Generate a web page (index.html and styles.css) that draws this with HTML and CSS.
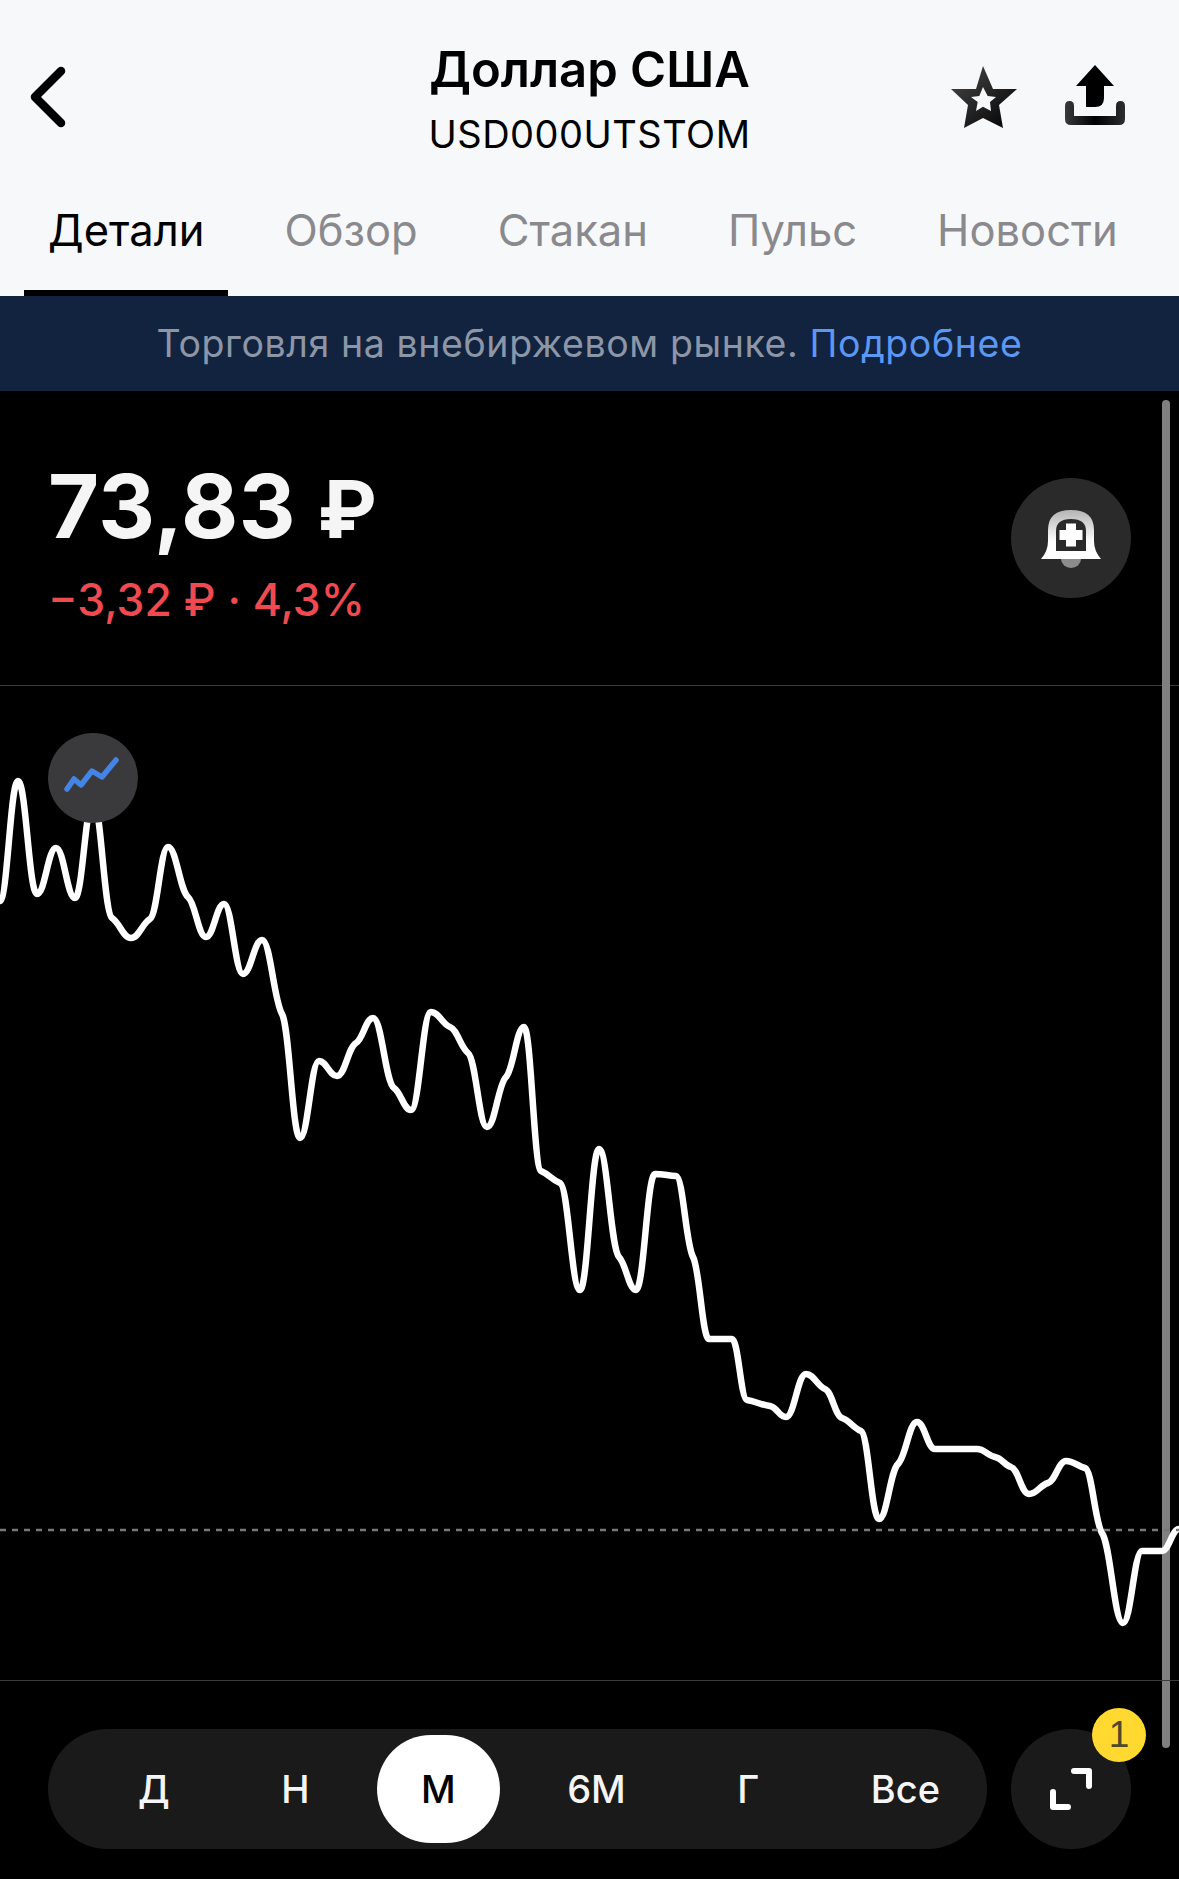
FILE: index.html
```html
<!DOCTYPE html>
<html lang="ru">
<head>
    <meta charset="UTF-8">
    <meta name="viewport" content="width=device-width, initial-scale=1.0">
    <title>Доллар США</title>
    <link rel="stylesheet" href="styles.css">
</head>
<body>
    <header class="top">
        <div class="nav">
            <button class="back" type="button">
                <svg width="40" height="64" viewBox="0 0 40 64"><path d="M32 6 L6 32 L32 58" fill="none" stroke="#000" stroke-width="8.5" stroke-linecap="round" stroke-linejoin="round"/></svg>
            </button>
            <div class="title">
                <h1>Доллар США</h1>
                <p>USD000UTSTOM</p>
            </div>
            <div class="actions">
                <svg class="star" width="68" height="66" viewBox="0 0 68 66">
                    <defs>
                        <linearGradient id="starFill" x1="0" y1="0" x2="1" y2="1">
                            <stop offset="0" stop-color="#4a4a4a"/>
                            <stop offset="1" stop-color="#000"/>
                        </linearGradient>
                    </defs>
                    <path fill="url(#starFill)" fill-rule="evenodd" d="M33 1 L43 24 L67 24 L49 40 L53 63 L33 53 L14 63 L18 40 L1 24 L26 24 Z M33 22 L29.3 31 L21 32 L27.7 37 L26 46 L33 41.7 L41 46 L40 37 L46 32 L37.7 31 Z"/>
                </svg>
                <svg class="share" width="60" height="62" viewBox="0 0 60 62">
                    <defs>
                        <linearGradient id="trayFill" x1="0" y1="0" x2="1" y2="0">
                            <stop offset="0" stop-color="#3a3a3a"/>
                            <stop offset="0.5" stop-color="#000"/>
                            <stop offset="1" stop-color="#2e2e2e"/>
                        </linearGradient>
                    </defs>
                    <path d="M30 0 L49 21 L39 21 L39 33 Q39 42 30 42 L21 42 L21 21 L11 21 Z" fill="#000"/>
                    <path d="M0 41 Q0 36 4.5 36 Q9 36 9 41 L9 51 L51 51 L51 41 Q51 36 55.5 36 Q60 36 60 41 L60 54 Q60 60 54 60 L6 60 Q0 60 0 54 Z" fill="url(#trayFill)"/>
                </svg>
            </div>
        </div>
        <nav class="tabs">
            <a class="tab tab-active">Детали</a>
            <a class="tab">Обзор</a>
            <a class="tab">Стакан</a>
            <a class="tab">Пульс</a>
            <a class="tab">Новости</a>
        </nav>
    </header>

    <div class="banner">Торговля на внебиржевом рынке. <a>Подробнее</a></div>

    <main class="screen">
        <div class="scrollbar"></div>

        <section class="quote">
            <div>
                <div class="price">73,83 <span class="currency">₽</span></div>
                <div class="change">−3,32 ₽ · 4,3%</div>
            </div>
            <button class="round-btn alarm" type="button">
                <svg width="60" height="60" viewBox="0 0 60 60">
                    <defs>
                        <linearGradient id="bellFill" x1="0" y1="0" x2="0" y2="1">
                            <stop offset="0" stop-color="#b4b4b4"/>
                            <stop offset="0.65" stop-color="#fff"/>
                        </linearGradient>
                    </defs>
                    <path d="M20 51 h20 a10 9 0 0 1 -20 0 Z" fill="#8c8c8c"/>
                    <path fill="url(#bellFill)" fill-rule="evenodd" d="M0 51 Q7 43 7 33 L7 22 Q7 2 30 2 Q53 2 53 22 L53 33 Q53 43 60 51 Z M15 43 L45 43 L45 23 Q45 11 30 11 Q15 11 15 23 Z"/>
                    <path d="M25 15.5 h10 v6.5 h6.5 v10 h-6.5 v6.5 h-10 v-6.5 h-6.5 v-10 h6.5 Z" fill="#fff"/>
                </svg>
            </button>
        </section>

        <section class="chart">
            <svg id="priceChart" class="chart-svg" width="1179" height="994" viewBox="0 685 1179 994"></svg>
            <button class="mode" type="button">
                <svg width="90" height="90" viewBox="0 0 90 90"><polyline points="19,56 26,46 33,52 44,38 54,44 68,27" fill="none" stroke="#4484e6" stroke-width="5.5" stroke-linecap="round" stroke-linejoin="round"/></svg>
            </button>
        </section>

        <section class="controls">
            <div class="periods">
                <span class="period">Д</span>
                <span class="period">Н</span>
                <span class="period period-active">М</span>
                <span class="period">6М</span>
                <span class="period">Г</span>
                <span class="period">Все</span>
            </div>
            <button class="round-btn expand" type="button">
                <svg width="44" height="44" viewBox="0 0 44 44"><path d="M25 4 H40 V19 M4 25 V40 H19" fill="none" stroke="#fff" stroke-width="6" stroke-linecap="round" stroke-linejoin="round"/></svg>
                <span class="badge">1</span>
            </button>
        </section>
    </main>

    <script src="chart.js"></script>
</body>
</html>
```

FILE: styles.css
```css
* {
    box-sizing: border-box;
}
body {
    margin: 0;
    width: 1179px;
    height: 1879px;
    overflow: hidden;
    background-color: #000;
    font-family: Inter, "Liberation Sans", sans-serif;
}
button {
    padding: 0;
    border: none;
    background: none;
}

/* header */
.top {
    height: 296px;
    background-color: #f7f8fa;
    color: #000;
}
.nav {
    height: 180px;
    display: flex;
    align-items: flex-start;
    justify-content: space-between;
    padding: 40px 54px 0 29px;
    position: relative;
}
.back {
    margin-top: 25px;
    display: flex;
}
.title {
    position: absolute;
    left: 0;
    right: 0;
    text-align: center;
}
.title h1 {
    margin: 0;
    font-size: 49px;
    line-height: 60px;
    font-weight: 600;
}
.title p {
    margin: 4px 0 0;
    font-size: 38px;
    line-height: 60px;
    letter-spacing: 0.5px;
}
.actions {
    display: flex;
    align-items: flex-start;
    gap: 47px;
    margin-top: 25px;
}
.actions svg {
    display: block;
}
.tabs {
    display: flex;
    gap: 32px;
    padding-left: 24px;
}
.tab {
    height: 116px;
    padding: 20px 24px 0;
    font-size: 43.5px;
    line-height: 60px;
    color: #8a8a8e;
}
.tab-active {
    color: #000;
    border-bottom: 6px solid #000;
}

/* over the counter notice */
.banner {
    height: 95px;
    line-height: 95px;
    text-align: center;
    font-size: 37.5px;
    letter-spacing: 0.6px;
    background-color: #12233f;
    color: #8d96a6;
}
.banner a {
    color: #5c98f2;
}

.screen {
    position: relative;
    height: 1488px;
    background-color: #000;
}
.scrollbar {
    position: absolute;
    top: 9px;
    left: 1162px;
    width: 8px;
    height: 1348px;
    border-radius: 4px;
    background-color: #808080;
}

/* price block */
.quote {
    height: 295px;
    display: flex;
    justify-content: space-between;
    align-items: flex-start;
    padding: 70px 48px 0 48px;
    border-bottom: 1px solid #3a3a3a;
    color: #f5f5f5;
}
.price {
    font-size: 88px;
    line-height: 90px;
    font-weight: 700;
    letter-spacing: 0.5px;
}
.currency {
    font-size: 80px;
}
.change {
    margin-top: 21px;
    font-size: 44.5px;
    line-height: 50px;
    font-weight: 500;
    color: #ee4a50;
}
.round-btn {
    position: relative;
    width: 120px;
    height: 120px;
    flex: none;
    display: flex;
    align-items: center;
    justify-content: center;
    border-radius: 50%;
}
.alarm {
    margin-top: 17px;
    background-color: #2a2a2a;
}

/* chart */
.chart {
    position: relative;
    height: 995px;
    border-bottom: 1px solid #3a3a3a;
}
.chart-svg {
    display: block;
}
.mode {
    position: absolute;
    top: 47px;
    left: 48px;
    width: 90px;
    height: 90px;
    border-radius: 50%;
    background-color: #3a3a3c;
}
.mode svg {
    display: block;
}

/* period switch */
.controls {
    display: flex;
    justify-content: space-between;
    padding: 48px 48px 0 48px;
}
.periods {
    width: 939px;
    height: 120px;
    display: flex;
    align-items: stretch;
    justify-content: space-between;
    padding: 6px 3px 6px 46px;
    border-radius: 60px;
    background-color: #1a1a1a;
}
.period {
    display: flex;
    align-items: center;
    padding: 0 44px;
    border-radius: 54px;
    font-size: 38px;
    font-weight: 500;
    color: #f5f5f5;
}
.period-active {
    background-color: #fff;
    color: #000;
}
.expand {
    background-color: #1a1a1a;
}
.badge {
    position: absolute;
    top: -21px;
    right: -15px;
    width: 54px;
    height: 54px;
    border-radius: 50%;
    background-color: #ffd92f;
    color: #4d4a2a;
    font-size: 37px;
    font-weight: 300;
    line-height: 54px;
    text-align: center;
}
```

FILE: chart.js
```js
// daily closes, x and y in page pixels
const points = [
    [-18, 906], [0, 900], [18, 780], [37, 893], [56, 847], [75, 897], [93, 800], [112, 917],
    [131, 937], [150, 918], [168, 846], [188, 896], [206, 936], [224, 903], [243, 973],
    [262, 939], [282, 1013], [300, 1137], [319, 1060], [337, 1075], [356, 1042], [373, 1017],
    [394, 1087], [411, 1109], [431, 1011], [450, 1026], [468, 1052], [487, 1126], [506, 1076],
    [524, 1026], [541, 1170], [560, 1182], [580, 1289], [599, 1148], [619, 1256], [636, 1289],
    [655, 1173], [676, 1175], [693, 1256], [709, 1338], [732, 1338], [747, 1399], [770, 1405],
    [786, 1416], [806, 1373], [825, 1388], [842, 1417], [861, 1430], [879, 1518], [898, 1463],
    [917, 1421], [935, 1448], [956, 1448], [977, 1448], [995, 1456], [1011, 1466], [1029, 1493],
    [1048, 1482], [1066, 1460], [1085, 1467], [1102, 1532], [1123, 1622], [1142, 1550],
    [1162, 1550], [1179, 1528], [1197, 1528]
];

// monotone cubic with long flat handles: every close shows as a small shoulder
function smoothPath(pts) {
    const slopes = [];
    for (let i = 0; i < pts.length - 1; i++) {
        slopes.push((pts[i + 1][1] - pts[i][1]) / (pts[i + 1][0] - pts[i][0]));
    }
    const tangents = pts.map((p, i) => {
        if (i === 0 || i === pts.length - 1) return 0;
        const a = slopes[i - 1];
        const b = slopes[i];
        if (a * b <= 0) return 0;
        return 0.35 * 2 * a * b / (a + b);
    });
    let d = `M${pts[0][0]} ${pts[0][1]}`;
    for (let i = 0; i < pts.length - 1; i++) {
        const h = (pts[i + 1][0] - pts[i][0]) * 0.42;
        d += ` C${pts[i][0] + h} ${pts[i][1] + tangents[i] * h}`;
        d += ` ${pts[i + 1][0] - h} ${pts[i + 1][1] - tangents[i + 1] * h}`;
        d += ` ${pts[i + 1][0]} ${pts[i + 1][1]}`;
    }
    return d;
}

const svg = document.getElementById('priceChart');
const ns = 'http://www.w3.org/2000/svg';

const line = document.createElementNS(ns, 'path');
line.setAttribute('d', smoothPath(points));
line.setAttribute('fill', 'none');
line.setAttribute('stroke', '#fff');
line.setAttribute('stroke-width', '6.5');
svg.appendChild(line);

const level = document.createElementNS(ns, 'line');
level.setAttribute('x1', '0');
level.setAttribute('x2', '1179');
level.setAttribute('y1', '1529');
level.setAttribute('y2', '1529');
level.setAttribute('stroke', '#777');
level.setAttribute('stroke-width', '2.5');
level.setAttribute('stroke-dasharray', '6 6');
svg.appendChild(level);
```
